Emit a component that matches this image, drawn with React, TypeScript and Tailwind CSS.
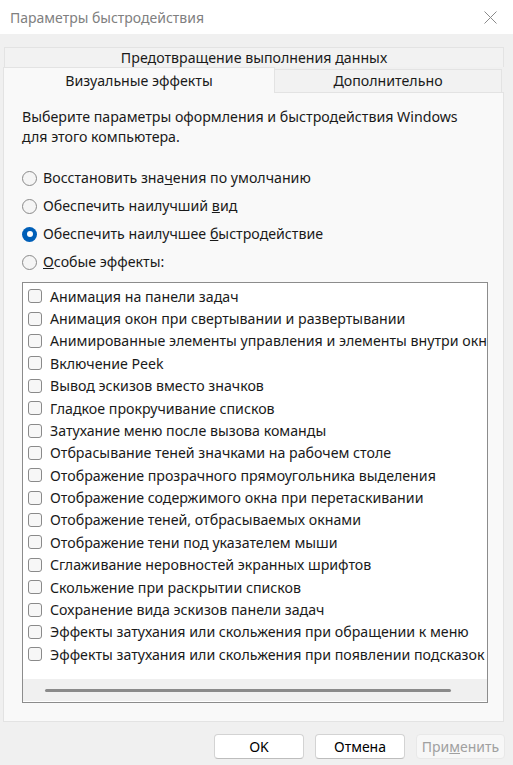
const effects = [
  "Анимация на панели задач",
  "Анимация окон при свертывании и развертывании",
  "Анимированные элементы управления и элементы внутри окна",
  "Включение Peek",
  "Вывод эскизов вместо значков",
  "Гладкое прокручивание списков",
  "Затухание меню после вызова команды",
  "Отбрасывание теней значками на рабочем столе",
  "Отображение прозрачного прямоугольника выделения",
  "Отображение содержимого окна при перетаскивании",
  "Отображение теней, отбрасываемых окнами",
  "Отображение тени под указателем мыши",
  "Сглаживание неровностей экранных шрифтов",
  "Скольжение при раскрытии списков",
  "Сохранение вида эскизов панели задач",
  "Эффекты затухания или скольжения при обращении к меню",
  "Эффекты затухания или скольжения при появлении подсказок",
];

function Radio({ checked, children }: { checked?: boolean; children: React.ReactNode }) {
  return (
    <div className="h-[28px] flex items-center gap-[6px]">
      {checked ? (
        <span className="w-[15px] h-[15px] rounded-full bg-[#005fb8] flex items-center justify-center">
          <span className="w-[6px] h-[6px] rounded-full bg-white" />
        </span>
      ) : (
        <span className="w-[15px] h-[15px] rounded-full border border-[#8a8a8a] bg-[#f5f5f5]" />
      )}
      <span>{children}</span>
    </div>
  );
}

export default function App() {
  return (
    <div
      className="w-[513px] h-[765px] flex flex-col bg-[#f0f0f0] text-[14.2px] text-[#1a1a1a] overflow-hidden"
      style={{ fontFamily: '"Noto Sans", "Open Sans", sans-serif' }}
    >
      {/* title bar */}
      <div className="h-[34px] bg-white flex items-center justify-between pl-[10px] pr-[16px] shrink-0">
        <span className="text-[14px] text-[#808080]">Параметры быстродействия</span>
        <svg width="13" height="13" viewBox="0 0 13 13">
          <path d="M0.5 0.5L12.5 12.5M12.5 0.5L0.5 12.5" stroke="#8a8a8a" strokeWidth="1" />
        </svg>
      </div>

      {/* tabs */}
      <div className="mt-[13px] ml-[4px] w-[500px] h-[20px] border border-b-0 border-[#e3e3e3] bg-[#f2f2f2] flex items-center justify-center">
        Предотвращение выполнения данных
      </div>
      <div className="flex items-end ml-[3px] h-[25px]">
        <div className="w-[272px] h-[26px] border border-b-0 border-[#e3e3e3] bg-[#f9f9f9] flex items-center justify-center relative z-10 -mb-px">
          Визуальные эффекты
        </div>
        <div className="w-[227px] h-[23px] border border-l-0 border-b-0 border-[#e3e3e3] bg-[#f2f2f2] flex items-center justify-center">
          Дополнительно
        </div>
      </div>

      {/* panel */}
      <div className="ml-[3px] w-[501px] h-[630px] border border-[#e3e3e3] bg-[#f9f9f9] pl-[18px] pt-[14px]">
        <p className="leading-[20px]">
          Выберите параметры оформления и быстродействия Windows
          <br />
          для этого компьютера.
        </p>
        <div className="mt-[17px]">
          <Radio>
            Восстановить зна<u>ч</u>ения по умолчанию
          </Radio>
          <Radio>
            Обеспечить наилучший <u>в</u>ид
          </Radio>
          <Radio checked>
            Обеспечить наилучшее <u>б</u>ыстродействие
          </Radio>
          <Radio>
            <u>О</u>собые эффекты:
          </Radio>
        </div>

        <div className="mt-[6px] w-[466px] h-[421px] border border-[#8c8c8c] bg-white flex flex-col overflow-hidden">
          <div className="pt-[2px] flex-1">
            {effects.map((e) => (
              <div key={e} className="h-[22.4px] flex items-center gap-[8px] pl-[5px] whitespace-nowrap">
                <span className="w-[14px] h-[14px] shrink-0 rounded-[3px] border border-[#8a8a8a] bg-[#f7f7f7]" />
                <span>{e}</span>
              </div>
            ))}
          </div>
          <div className="h-[22px] bg-[#f0f0f0] flex items-center pl-[22px] mb-[1px]">
            <div className="w-[406px] h-[3px] rounded-full bg-[#8a8a8a]" />
          </div>
        </div>
      </div>

      {/* buttons */}
      <div className="mt-[12px] flex justify-end gap-[11px] pr-[8px]">
        <button className="w-[90px] h-[25px] rounded-[4px] border border-[#d3d3d3] border-b-[#bdbdbd] bg-white text-[14px] text-black">
          OK
        </button>
        <button className="w-[90px] h-[25px] rounded-[4px] border border-[#d3d3d3] border-b-[#bdbdbd] bg-white text-[14px] text-black">
          Отмена
        </button>
        <button className="w-[89px] h-[25px] rounded-[4px] border border-[#e8e8e8] bg-[#f7f7f7] text-[14px] text-[#a0a0a0]">
          При<u>м</u>енить
        </button>
      </div>
    </div>
  );
}
